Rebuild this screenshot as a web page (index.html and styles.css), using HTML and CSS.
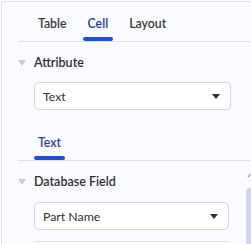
FILE: index.html
```html
<!DOCTYPE html>
<html lang="en">
<head>
  <meta charset="UTF-8" />
  <meta name="viewport" content="width=device-width, initial-scale=1.0"/>
  <title>Cell Properties</title>
  <link rel="stylesheet" href="styles.css">
</head>
<body>
  <div class="panel">
    <div class="tabs">
      <div class="tab">Table</div>
      <div class="tab active">Cell</div>
      <div class="tab">Layout</div>
    </div>

    <div class="section-head">
      <span class="arrow"></span>
      <span>Attribute</span>
    </div>
    <div class="select">
      <span>Text</span>
      <span class="caret"></span>
    </div>

    <div class="subtabs">
      <div class="subtab active">Text</div>
    </div>

    <div class="scroll-area">
      <div class="section-head">
        <span class="arrow"></span>
        <span>Database Field</span>
      </div>
      <div class="select narrow">
        <span>Part Name</span>
        <span class="caret"></span>
      </div>
      <div class="next-field"></div>
      <div class="scroll-grip"></div>
      <div class="scrollbar"></div>
    </div>
  </div>
</body>
</html>
```

FILE: styles.css
```css
html, body {
  margin: 0;
  background: #fafbff;
}
body {
  font-family: Lato, "Noto Sans", sans-serif;
  font-size: 12.3px;
  color: #2f2f33;
  padding: 1px 0 0 1px;
  height: 243px;
  overflow: hidden;
}
.panel {
  border-top: 1px solid #e2e3e9;
  border-left: 1px solid #e2e3e9;
  padding-left: 16px;
  height: 300px;
}
.tabs {
  display: flex;
  height: 39px;
  padding-left: 15px;
  gap: 11px;
  border-bottom: 1px solid #e0e1e7;
}
.tab {
  position: relative;
  padding: 13px 5px 0;
  font-size: 12.3px;
  font-weight: 600;
  line-height: 18px;
  color: #3a3a40;
}
.tab.active {
  color: #22389a;
}
.tab.active::after,
.subtab.active::after {
  content: "";
  position: absolute;
  left: 0;
  right: 0;
  bottom: 0;
  height: 4px;
  border-radius: 2px;
  background: #1b4fd8;
}
.section-head {
  display: flex;
  align-items: center;
  height: 20px;
  margin-top: 11px;
  font-size: 12.5px;
  font-weight: 600;
  line-height: 20px;
}
.arrow {
  width: 0;
  height: 0;
  border-left: 4px solid transparent;
  border-right: 4px solid transparent;
  border-top: 6px solid #c7cde0;
  margin-right: 8px;
}
.select {
  display: flex;
  align-items: center;
  justify-content: space-between;
  box-sizing: border-box;
  height: 28px;
  margin: 9px 0 0 16px;
  width: 197px;
  padding: 0 10px 0 8px;
  background: #fff;
  border: 1px solid #cbd5ef;
  border-radius: 5px;
}
.select.narrow {
  width: 195px;
  margin-top: 10px;
}
.caret {
  width: 0;
  height: 0;
  border-left: 4px solid transparent;
  border-right: 4px solid transparent;
  border-top: 5px solid #2f2f33;
}
.subtabs {
  display: flex;
  height: 50px;
  padding-left: 16px;
  border-bottom: 1px solid #e0e1e7;
}
.subtab {
  position: relative;
  padding: 24px 4px 0;
  font-size: 12.3px;
  line-height: 18px;
  font-weight: 600;
}
.subtab.active {
  color: #2a3cae;
}
.scroll-area {
  position: relative;
}
.scroll-area .section-head {
  margin-top: 11px;
}
.next-field {
  margin: 11px 0 0 16px;
  width: 195px;
  border-top: 1px solid #e0e1e7;
}
.scroll-grip {
  position: absolute;
  top: 3px;
  left: 229px;
  width: 5px;
  height: 1px;
  background: #8a8e99;
  transform: rotate(-45deg);
}
.scrollbar {
  position: absolute;
  top: 16px;
  left: 228px;
  width: 6px;
  height: 100px;
  border-radius: 4px 0 0 0;
  background: #cad6f2;
}
```
